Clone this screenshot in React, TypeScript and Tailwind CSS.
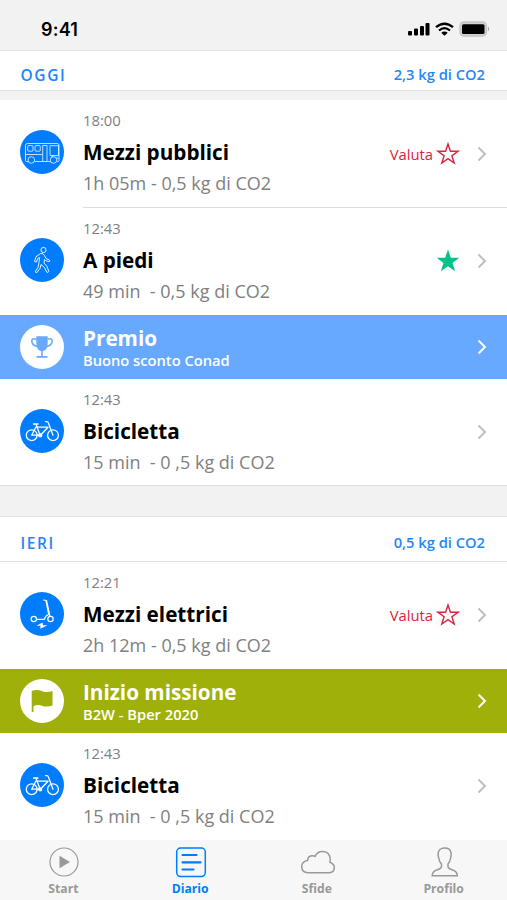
import type { ReactNode } from "react";

const BusIcon = () => (
  <svg viewBox="0 0 44 44" className="h-11 w-11" fill="none" stroke="#fff" strokeWidth="1" strokeOpacity=".75" strokeLinejoin="round">
    <path d="M8 31.5H6.5Q5.500 31.5 5.500 30.500V15.500Q5.500 13.500 7.500 13.500H37.500Q39 13.500 39 15.500V30.500Q39 31.500 37.500 31.500H37M14.500 31.500H30.500" />
    <circle cx="11.300" cy="30" r="3.300" />
    <circle cx="33.500" cy="30" r="3.300" />
    <rect x="7.700" y="15.600" width="5.300" height="5.600" rx="1" />
    <rect x="15" y="15.600" width="5.300" height="5.600" rx="1" />
    <path d="M22.700 15.500H27V31M22.700 15.500V31.500M30 15.700H38.500V25.500H30ZM5.500 24.500H22M31 27.500L33 26M36.500 27L38.500 29" />
  </svg>
);

const WalkIcon = () => (
  <svg viewBox="0 0 44 44" className="h-11 w-11" fill="none" stroke="#fff" strokeWidth="1" strokeOpacity=".9" strokeLinejoin="round">
    <circle cx="23.500" cy="12" r="2.600" />
    <path d="M20.500 15.500Q23.500 15 24.500 17.500L26 20.500L29.500 22Q30.500 23 29 23.700L25.500 22.500L24.500 21.500L24 25L27 28.500L28.800 33.500Q28 35.300 26.700 34L24.500 29.500L21 26.500L20 30.500L17 34.500Q15.200 34.800 15.500 33.200L18 29.500L19 24.500L19.500 19.500L17.700 20.500L16.500 24Q15 24.500 14.700 23L16 18.800Z" />
  </svg>
);

const BikeIcon = () => (
  <svg viewBox="0 0 44 44" className="h-11 w-11" fill="none" stroke="#fff" strokeWidth="1.300" strokeLinecap="round" strokeLinejoin="round">
    <circle cx="11.700" cy="26.200" r="5.400" />
    <circle cx="33" cy="26.200" r="5.400" />
    <path d="M11.700 26.200L15.800 18.200H28L20.200 26.500L16 15.300M13.500 15H18M25.500 12.600H27Q28.300 12.800 28.500 14.300L33 26.200M11.700 26.200H20.200" />
    <circle cx="20.200" cy="26.400" r="1.500" />
  </svg>
);

const ScooterIcon = () => (
  <svg viewBox="0 0 44 44" className="h-11 w-11" fill="none" stroke="#fff" strokeWidth="1.200" strokeLinecap="round" strokeLinejoin="round">
    <circle cx="13.800" cy="27" r="2.700" />
    <circle cx="30.500" cy="27" r="2.700" />
    <path d="M23.500 8L26.500 8.500L30 24.500M26 9L28.700 22.500Q25.500 23.500 24.300 27.300H16.500" />
    <path d="M22.500 30.500L16.500 33.700H20.500L20.300 36.700L27.500 33.200H23Z" fill="#fff" stroke="none" />
  </svg>
);

const TrophyIcon = () => (
  <svg viewBox="0 0 44 44" className="h-11 w-11" fill="none" stroke="#66a9ff" strokeWidth="1.600">
    <path d="M16.300 11.200H27.700V18Q27.700 25 22.800 26.200V31H27.500V32.700H16.500V31H21.200V26.200Q16.300 25 16.300 18Z" fill="#66a9ff" stroke="none" />
    <path d="M16.500 14.200Q11.700 12.700 11.800 16Q12 20.500 17.500 21.500M27.500 14.200Q32.300 12.700 32.200 16Q32 20.500 26.500 21.500" />
  </svg>
);

const FlagIcon = () => (
  <svg viewBox="0 0 44 44" className="h-11 w-11" fill="#a0b00b">
    <path d="M11.700 12Q17 9.700 22.500 12.200Q27 14 32.500 12V26.500Q27 28.500 22 26.700Q17.500 25 13.500 27.300V32.500Q12.500 33.500 11.700 32.500Z" />
  </svg>
);

const Star = ({ filled }: { filled?: boolean }) => (
  <svg viewBox="0 0 24 24" className="h-6 w-6" fill={filled ? "#00c389" : "none"} stroke={filled ? "none" : "#d9233f"} strokeWidth="1.400">
    {filled ? (
      <path d="M12 .5L14.800 8.800H23.300L16.500 13.900L19.200 22.200L12 17.200L4.800 22.200L7.500 13.900L.7 8.800H9.200Z" />
    ) : (
      <path d="M12 2L14.400 9.300H22L15.900 13.800L18.200 21L12 16.600L5.800 21L8.100 13.800L2 9.300H9.600Z" />
    )}
  </svg>
);

const Chevron = ({ color = "#bdbdbd" }: { color?: string }) => (
  <svg viewBox="0 0 10 16" className="h-4 w-2.5 shrink-0" fill="none" stroke={color} strokeWidth="1.900">
    <path d="M1.500 1.500L8 8L1.500 14.500" />
  </svg>
);

function StatusBar() {
  return (
    <div className="flex h-[50px] items-center justify-between bg-[#f2f2f2] pt-2 pr-[17px] pl-[41px]">
      <span className="font-['Inter',sans-serif] text-[18px] font-semibold tracking-[0.2px] text-black">9:41</span>
      <div className="flex items-center">
        <svg width="22" height="14" viewBox="0 0 22 14" className="mr-[5px]">
          <rect x="0" y="9" width="4" height="4.500" rx="1" />
          <rect x="6" y="6.500" width="4" height="7" rx="1" />
          <rect x="12" y="4" width="4" height="9.500" rx="1" />
          <rect x="17.500" y="1" width="4" height="12.500" rx="1" />
        </svg>
        <svg width="19" height="14" viewBox="0 0 19 14" className="mr-[5px]" fill="none" stroke="#000" strokeWidth="2.300">
          <path d="M1 5.200Q9.500 -1.800 18 5.200M4 8.500Q9.500 3.800 15 8.500" />
          <path d="M9.500 13.700L6.300 10.700Q9.500 8.200 12.700 10.700Z" fill="#000" stroke="none" />
        </svg>
        <svg width="31" height="16" viewBox="0 0 31 16">
          <rect x="1" y="1" width="26.500" height="14" rx="4" fill="#d2d2d2" stroke="#c4c4c4" strokeWidth="1.300" />
          <rect x="3" y="3.200" width="22.500" height="9.800" rx="1.500" />
          <path d="M29 5.500Q31 8 29 10.500Z" fill="#999" />
        </svg>
      </div>
    </div>
  );
}

function DayHeader({ title, total, className }: { title: string; total: string; className: string }) {
  return (
    <div className={`flex items-center justify-between border-y border-[#e2e2e2] bg-white pr-[22px] pl-[20.500px] text-[#1f87fa] ${className}`}>
      <span className="mt-px text-[15.500px] leading-5 font-semibold tracking-[1.600px]">{title}</span>
      <span className="mb-px text-[14.700px] leading-5 font-semibold">{total}</span>
    </div>
  );
}

type TripProps = {
  icon: ReactNode;
  time: string;
  title: string;
  detail: string;
  rating?: "todo" | "done";
  divider?: boolean;
};

function Trip({ icon, time, title, detail, rating, divider }: TripProps) {
  return (
    <div className="flex h-[107.500px] pl-5">
      <div className="mt-[30.400px] h-11 w-11 shrink-0 rounded-full bg-[#007cff]">{icon}</div>
      <div className={`ml-[19px] flex flex-1 justify-between pr-5 ${divider ? "border-b border-[#dedede]" : ""}`}>
        <div className="pt-[10px] whitespace-pre">
          <p className="text-[14.800px] leading-5 text-[#808080]">{time}</p>
          <p className="mt-[8px] text-[20.700px] leading-7 font-bold text-black">{title}</p>
          <p className="mt-[5px] text-[18px] leading-6 text-[#808080]">{detail}</p>
        </div>
        <div className="mt-[41.500px] flex h-6 items-center">
          {rating === "todo" && <span className="mr-[3px] pt-px text-[14.800px] text-[#d9233f]">Valuta</span>}
          {rating && <Star filled={rating === "done"} />}
          <span className="ml-[17px]"><Chevron /></span>
        </div>
      </div>
    </div>
  );
}

function Banner({ icon, title, detail, className }: { icon: ReactNode; title: string; detail: string; className: string }) {
  return (
    <div className={`flex h-[63.500px] items-center pr-5 pl-5 text-white ${className}`}>
      <div className="h-11 w-11 rounded-full bg-white">{icon}</div>
      <div className="mt-[4px] ml-[19px] flex-1">
        <p className="text-[20.700px] leading-6 font-bold">{title}</p>
        <p className="text-[14.700px] leading-[21px] font-semibold">{detail}</p>
      </div>
      <Chevron color="#fff" />
    </div>
  );
}

const tabs = [
  {
    label: "Start",
    icon: (
      <>
        <circle cx="17" cy="15" r="14" strokeWidth="1.200" />
        <path d="M12.500 8.700L23 15L12.500 21.300Z" fill="currentColor" stroke="none" />
      </>
    ),
  },
  {
    label: "Diario",
    active: true,
    icon: (
      <>
        <rect x="2.700" y="1" width="28.600" height="28.600" rx="4" />
        <path d="M8.500 8H22.500M8.500 15.300H26.500M8.500 22.500H19.500" strokeWidth="2.200" strokeLinecap="round" />
      </>
    ),
  },
  {
    label: "Sfide",
    icon: <path d="M7 25.800Q.8 25.500 .7 19.500Q1 14.300 6.500 13.500Q7 8.800 11.500 8.800Q13 8.800 14 9.500Q16.500 4.200 22 4.500Q29 5 29.200 12.500L28.900 15.300Q33.300 17 33.300 20.500Q33 25.800 27.500 25.800Z" />,
  },
  {
    label: "Profilo",
    icon: <path d="M16 1Q22 .6 23 5.500Q23.400 8 22.600 11Q22 14.800 20 17V19.500Q20 21.500 24 22.700Q29.300 24.200 29.300 28.800H4.200Q4.200 24.200 9.500 22.700Q13.500 21.500 13.500 19.500V17Q11.200 14.800 10.700 11Q9.800 8 10.300 5.500Q11.500 1.300 16 1Z" />,
  },
];

function TabBar() {
  return (
    <nav className="grid h-[60px] grid-cols-4 bg-[#f7f7f7]">
      {tabs.map((t) => (
        <div key={t.label} className={`flex flex-col items-center pt-[7px] ${t.active ? "text-[#007cff]" : "text-[#999]"}`}>
          <svg width="34" height="31" viewBox="0 0 34 31" className="translate-x-px" fill="none" stroke="currentColor" strokeWidth="1.500">{t.icon}</svg>
          <span className="mt-[2px] text-[12.200px] leading-[18px] font-bold">{t.label}</span>
        </div>
      ))}
    </nav>
  );
}

export default function App() {
  return (
    <div className="flex h-[900px] w-[507px] flex-col overflow-hidden bg-white font-['Open_Sans',sans-serif]">
      <StatusBar />
      <DayHeader title="OGGI" total="2,3 kg di CO2" className="h-[41px] pt-[7px]" />
      <div className="h-[9px] bg-[#f2f2f2]" />
      <Trip icon={<BusIcon />} time="18:00" title="Mezzi pubblici" detail="1h 05m - 0,5 kg di CO2" rating="todo" divider />
      <Trip icon={<WalkIcon />} time="12:43" title="A piedi" detail="49 min  - 0,5 kg di CO2" rating="done" />
      <Banner icon={<TrophyIcon />} title="Premio" detail="Buono sconto Conad" className="bg-[#66a9ff]" />
      <Trip icon={<BikeIcon />} time="12:43" title="Bicicletta" detail="15 min  - 0 ,5 kg di CO2" />
      <div className="-mt-px h-[31px] border-t border-[#dedede] bg-[#f2f2f2]" />
      <DayHeader title="IERI" total="0,5 kg di CO2" className="h-[45.500px] pt-[8px]" />
      <Trip icon={<ScooterIcon />} time="12:21" title="Mezzi elettrici" detail="2h 12m - 0,5 kg di CO2" rating="todo" />
      <Banner icon={<FlagIcon />} title="Inizio missione" detail="B2W - Bper 2020" className="bg-[#a0b00b]" />
      <Trip icon={<BikeIcon />} time="12:43" title="Bicicletta" detail="15 min  - 0 ,5 kg di CO2" />
      <TabBar />
    </div>
  );
}
